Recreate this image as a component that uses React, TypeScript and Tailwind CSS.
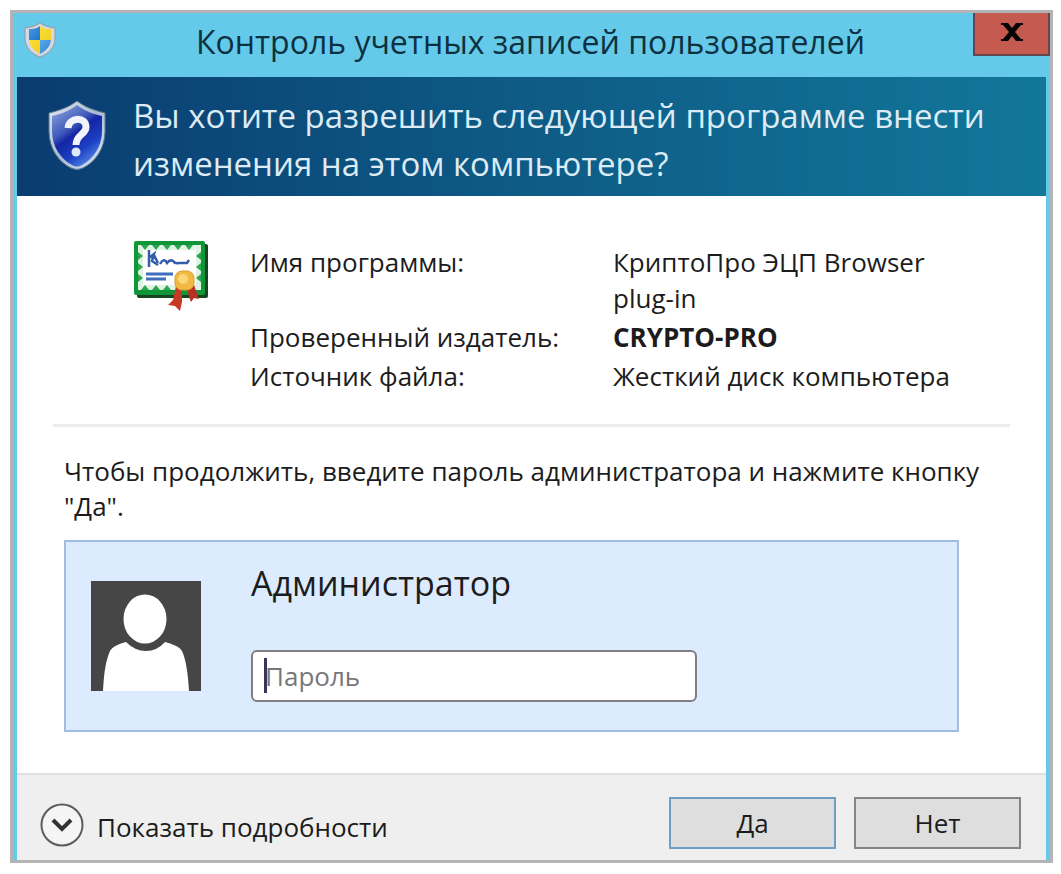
import { useState } from "react";

function WindowsShield() {
  return (
    <svg viewBox="0 0 32 36" className="h-9 w-8 shrink-0" aria-hidden="true">
      <defs>
        <clipPath id="uac-clip">
          <path d="M16 4C12 7 9 7 5 7V16C5 24 9 28 16 32C23 28 27 24 27 16V7C23 7 20 7 16 4Z" />
        </clipPath>
        <linearGradient id="uac-blue" x1="0" y1="0" x2="1" y2="1">
          <stop offset="0" stopColor="#5aa9e6" />
          <stop offset="1" stopColor="#1f74cf" />
        </linearGradient>
        <linearGradient id="uac-gold" x1="0" y1="0" x2="1" y2="1">
          <stop offset="0" stopColor="#fbe43a" />
          <stop offset="1" stopColor="#f3c81e" />
        </linearGradient>
      </defs>
      <path
        d="M16 1C12 4 7 5 1 6V16C1 26 8 32 16 35C24 32 31 26 31 16V6C25 5 20 4 16 1Z"
        fill="#d3d8e2"
        stroke="#9a979c"
      />
      <g clipPath="url(#uac-clip)">
        <rect width="16" height="18" fill="url(#uac-blue)" />
        <rect x="16" width="16" height="18" fill="url(#uac-gold)" />
        <rect y="18" width="16" height="18" fill="url(#uac-gold)" />
        <rect x="16" y="18" width="16" height="18" fill="url(#uac-blue)" />
      </g>
    </svg>
  );
}

function QuestionShield() {
  return (
    <svg viewBox="0 0 58 70" className="h-[70px] w-[58px] shrink-0" aria-hidden="true">
      <defs>
        <linearGradient id="q-rim" x1="0" y1="0" x2="1" y2="1">
          <stop offset="0" stopColor="#e6ebf2" />
          <stop offset="0.5" stopColor="#a9bbd2" />
          <stop offset="1" stopColor="#dce6f0" />
        </linearGradient>
        <linearGradient id="q-fill" x1="0.1" y1="0" x2="0.7" y2="1">
          <stop offset="0" stopColor="#8ba6dc" />
          <stop offset="0.38" stopColor="#4059bb" />
          <stop offset="0.5" stopColor="#1426a4" />
          <stop offset="0.75" stopColor="#1c3fc4" />
          <stop offset="1" stopColor="#5688e4" />
        </linearGradient>
      </defs>
      <path
        d="M29 1C25 4 18 9 1 13V31C1 49 11 62 23 68Q29 71 35 68C47 62 57 49 57 31V13C40 9 33 4 29 1Z"
        fill="url(#q-rim)"
        stroke="#5d7793"
      />
      <path
        d="M29 5C25 8 18 13 4 16V31C4 47 13 59 24 65Q29 68 34 65C45 59 54 47 54 31V16C40 13 33 8 29 5Z"
        fill="url(#q-fill)"
      />
      <path
        d="M20 28C21 17 38 16 38 27C38 35 28 34 28 45"
        fill="none"
        stroke="#f0f4fa"
        strokeWidth="7"
      />
      <circle cx="28" cy="52" r="4.5" fill="#dfe8fa" />
    </svg>
  );
}

function Certificate() {
  return (
    <svg viewBox="0 0 78 74" className="h-[74px] w-[78px]" aria-hidden="true">
      <rect x="3" y="4" width="71" height="54" rx="2" fill="#17451f" />
      <rect x="0" y="1" width="71" height="54" rx="2" fill="#0f9638" />
      <rect x="4" y="5" width="63" height="45" fill="#dff3e3" />
      <path
        d="M7 5l4 5 4-5zM18 5l4 5 4-5zM29 5l4 5 4-5zM40 5l4 5 4-5zM51 5l4 5 4-5zM7 50l4-5 4 5zM18 50l4-5 4 5zM29 50l4-5 4 5zM4 12l5 4-5 4zM4 23l5 4-5 4zM4 34l5 4-5 4zM67 12l-5 4 5 4zM67 23l-5 4 5 4zM67 34l-5 4 5 4z"
        fill="#2ca650"
      />
      <rect x="9" y="10" width="53" height="35" fill="#fff" />
      <path
        d="M15 27V10M15 18L20 14L18 21L24 25M20 15L24 23M26 24Q30 17 33 23Q36 19 39 21Q41 24 45 23H53L55 20"
        fill="none"
        stroke="#355eaa"
        strokeWidth="2.5"
      />
      <path d="M12 34H39M12 39H32" stroke="#3f6dbe" strokeWidth="3" />
      <path d="M42 46L39 60L34 65L41 66L46 71L48 62L48 48Z" fill="#c53a27" />
      <path d="M53 48L55 57L57 62L60 58L65 59L60 45Z" fill="#b62f22" />
      <rect x="41" y="31" width="19" height="19" rx="7" fill="#f1b843" stroke="#dc9c2a" />
      <circle cx="49" cy="39" r="5" fill="#fad879" />
    </svg>
  );
}

function Avatar() {
  return (
    <svg viewBox="0 0 110 110" className="mt-4 size-[110px] shrink-0" role="img" aria-label="Администратор">
      <rect width="110" height="110" fill="#464646" />
      <ellipse cx="54" cy="38" rx="21.5" ry="24.5" fill="#fff" />
      <path
        d="M12 110C13 91 15 79 19 70C22 65 28 63 35 61Q44 70 55 70Q66 70 74 61C81 63 88 65 91 70C95 79 97 92 98 110Z"
        fill="#fff"
      />
    </svg>
  );
}

const details = [
  { label: "Имя программы:", value: "КриптоПро ЭЦП Browser plug-in", bold: false },
  { label: "Проверенный издатель:", value: "CRYPTO-PRO", bold: true },
  { label: "Источник файла:", value: "Жесткий диск компьютера", bold: false },
];

export default function App() {
  const [password, setPassword] = useState("");

  return (
    <div className="min-h-screen bg-white p-[10px] pr-2 font-['Open_Sans','Noto_Sans',sans-serif] text-[#1c1c1c]">
      <main className="border-[3px] border-[#b4b4b4] bg-[#65c9e9]">
        <header className="flex h-16 items-start">
          <div className="pt-[9px] pl-[11px]">
            <WindowsShield />
          </div>
          <h1 className="min-w-0 flex-1 pt-1 pl-8 text-center text-[32px] leading-[50px] text-[#0c3140]">
            Контроль учетных записей пользователей
          </h1>
          <button
            type="button"
            aria-label="Закрыть"
            className="flex h-[43px] w-[77px] items-center justify-center border-2 border-t-0 border-[#63474c] bg-[#c45a50] pb-1"
          >
            <svg viewBox="0 0 22 20" className="h-5 w-[22px]" aria-hidden="true">
              <path
                d="M0 1H7L11 6L15 1H22V3H20L14 10L20 17H22V19H15L11 14L7 19H0V17H2L8 10L2 3H0Z"
                fill="#070404"
              />
            </svg>
          </button>
        </header>

        <div className="mx-1 bg-white">
          <section className="flex items-start gap-[27px] bg-linear-to-r from-[#0a3c70] via-[#0e5b86] to-[#12779a] px-[31px] pt-[15px] pb-2">
            <div className="pt-2">
              <QuestionShield />
            </div>
            <h2 className="min-w-0 flex-1 text-[33px] leading-12 text-[#dcebf4]">
              Вы хотите разрешить следующей программе внести изменения на этом компьютере?
            </h2>
          </section>

          <section className="px-9 pt-12">
            <div className="flex items-start pl-[81px]">
              <div className="-mt-1 w-[116px] shrink-0">
                <Certificate />
              </div>
              <dl className="grid flex-1 grid-cols-[363px_1fr] gap-y-[3px] pr-10 text-[26px] leading-9">
                {details.map((item) => (
                  <div key={item.label} className="contents">
                    <dt>{item.label}</dt>
                    <dd className={item.bold ? "font-bold" : ""}>{item.value}</dd>
                  </div>
                ))}
              </dl>
            </div>
            <hr className="mt-[30px] border-t-[3px] border-[#ececec]" />
          </section>

          <form className="pr-[60px] pb-[41px] pl-[47px]" onSubmit={(event) => event.preventDefault()}>
            <p className="pt-[27px] text-[26px] leading-[35px]">
              Чтобы продолжить, введите пароль администратора и нажмите кнопку "Да".
            </p>
            <div className="mt-4 mr-[27px] flex h-[192px] gap-[50px] border-2 border-[#a3bce6] bg-[#dcebfd] px-[25px] pt-[23px]">
              <Avatar />
              <div className="flex-1">
                <label htmlFor="password" className="block text-[34px] leading-9">
                  Администратор
                </label>
                <div className="relative mt-[49px] w-[446px]">
                  <input
                    id="password"
                    type="password"
                    placeholder="Пароль"
                    value={password}
                    onChange={(event) => setPassword(event.target.value)}
                    className="h-[52px] w-full rounded-md border-2 border-[#808084] bg-white px-3 text-[26px] outline-none placeholder:text-[#77777a]"
                  />
                  <span className="absolute top-2 left-[13px] h-[35px] w-[3px] bg-[#3c3456]" />
                </div>
              </div>
            </div>
          </form>

          <footer className="flex h-[87px] items-start border-t-2 border-[#e0e0e0] bg-[#efefef] pr-[25px] pl-[23px]">
            <button type="button" className="flex items-center gap-[13px] pt-[26px] text-[26px] leading-11">
              <svg viewBox="0 0 44 44" className="size-11" aria-hidden="true">
                <circle cx="22" cy="22" r="20.5" fill="#f5f5f5" stroke="#5c5c5c" strokeWidth="2" />
                <path d="M13 17L22 26L31 17" fill="none" stroke="#333" strokeWidth="4" />
              </svg>
              <span className="pt-1">Показать подробности</span>
            </button>
            <div className="mt-[22px] ml-auto flex gap-[18px] text-[26px]">
              <button type="button" className="h-[52px] w-[167px] border-2 border-[#6d9fc3] bg-[#dedede]">
                Да
              </button>
              <button type="button" className="h-[52px] w-[167px] border-2 border-[#858585] bg-[#dedede]">
                Нет
              </button>
            </div>
          </footer>
        </div>
      </main>
    </div>
  );
}
